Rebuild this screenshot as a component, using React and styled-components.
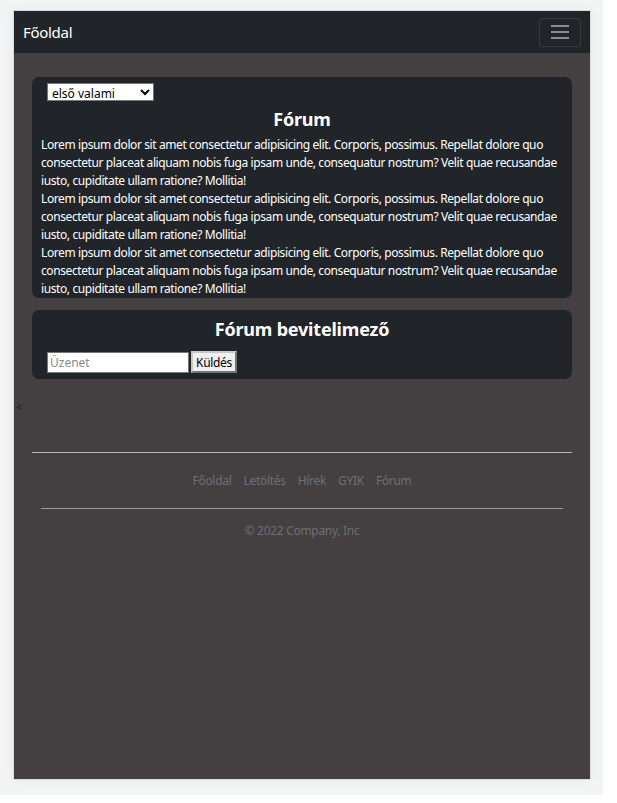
import styled, { createGlobalStyle } from "styled-components";

const GlobalStyle = createGlobalStyle`
  html, body {
    margin: 0;
    background: #ffffff;
  }
  * {
    box-sizing: border-box;
  }
`;

const paragraph =
  "Lorem ipsum dolor sit amet consectetur adipisicing elit. Corporis, possimus. Repellat dolore quo consectetur placeat aliquam nobis fuga ipsam unde, consequatur nostrum? Velit quae recusandae iusto, cupiditate ullam ratione? Mollitia!";

const footerLinks = ["Főoldal", "Letöltés", "Hírek", "GYIK", "Fórum"];

export default function App() {
  return (
    <>
      <GlobalStyle />
      <Backdrop>
        <DeviceFrame>
          <NavBar>
            <Brand>Főoldal</Brand>
            <Toggler aria-label="menu">
              <TogglerLine />
              <TogglerLine />
              <TogglerLine />
            </Toggler>
          </NavBar>
          <Main>
            <Card>
              <TopicSelect defaultValue="first">
                <option value="first">első valami</option>
              </TopicSelect>
              <CardTitle>Fórum</CardTitle>
              {[0, 1, 2].map((i) => (
                <Post key={i}>{paragraph}</Post>
              ))}
            </Card>
            <Card $gap>
              <CardTitle $large>Fórum bevitelimező</CardTitle>
              <MessageForm>
                <MessageInput placeholder="Üzenet" />
                <SendButton>Küldés</SendButton>
              </MessageForm>
            </Card>
          </Main>
          <BackMark>&lt;</BackMark>
          <Footer>
            <FooterNav>
              {footerLinks.map((link) => (
                <FooterLink key={link}>{link}</FooterLink>
              ))}
            </FooterNav>
            <Copyright>© 2022 Company, Inc</Copyright>
          </Footer>
        </DeviceFrame>
      </Backdrop>
    </>
  );
}

const Backdrop = styled.div`
  width: 603px;
  height: 795px;
  background: #f3f4f4;
  padding: 11px 13px 16px 14px;
`;

const DeviceFrame = styled.div`
  width: 576px;
  height: 768px;
  background: #443f40;
  outline: 1px solid #dcdcdc;
  box-shadow: 0 0 14px rgba(0, 0, 0, 0.06);
  font-family: "Noto Sans", "Open Sans", sans-serif;
  overflow: hidden;
`;

const NavBar = styled.nav`
  height: 42px;
  background: #212529;
  display: flex;
  align-items: center;
  justify-content: space-between;
  padding: 0 9px;
`;

const Brand = styled.span`
  color: #ffffff;
  font-size: 15px;
  letter-spacing: -0.3px;
`;

const Toggler = styled.button`
  width: 42px;
  height: 29px;
  border: 1px solid rgba(255, 255, 255, 0.1);
  border-radius: 4px;
  background: transparent;
  display: flex;
  flex-direction: column;
  align-items: center;
  justify-content: center;
  gap: 4px;
  padding: 0;
`;

const TogglerLine = styled.span`
  display: block;
  width: 18px;
  height: 2px;
  background: #8b8d90;
`;

const Main = styled.main`
  padding: 24px 18px 0;
  display: flex;
  flex-direction: column;
  gap: 12px;
`;

const Card = styled.section`
  background: #212529;
  border-radius: 7px;
  padding: ${(props) => (props.$gap ? "7px 9px 6px" : "6px 9px 0")};
  color: #ffffff;
`;

const TopicSelect = styled.select`
  display: block;
  margin-left: 6px;
  width: 107px;
  height: 18px;
  font-family: inherit;
  font-size: 12px;
  padding: 0;
  border: 1px solid #767676;
  border-radius: 0;
  background: #ffffff;
  color: #000000;
`;

const CardTitle = styled.h2`
  margin: ${(props) => (props.$large ? "0 0 10px" : "6px 0 5px")};
  text-align: center;
  font-size: 18px;
  line-height: 24px;
  font-weight: 700;
  letter-spacing: -0.2px;
`;

const Post = styled.p`
  margin: 0;
  font-size: 12px;
  line-height: 18px;
  letter-spacing: -0.4px;
`;

const MessageForm = styled.form`
  display: flex;
  align-items: center;
  gap: 2px;
  padding-left: 6px;
`;

const MessageInput = styled.input`
  width: 142px;
  height: 21px;
  font-family: inherit;
  font-size: 12px;
  padding: 1px 2px;
  border: 1px solid #767676;
  border-radius: 0;
  background: #ffffff;

  &::placeholder {
    color: #8a8a8a;
  }
`;

const SendButton = styled.button`
  height: 22px;
  font-family: inherit;
  font-size: 12px;
  letter-spacing: -0.3px;
  padding: 0 3px;
  color: #000000;
  background: #efefef;
  border: 2px outset #c8c8c8;
  border-radius: 0;
`;

const BackMark = styled.div`
  margin: 21px 0 0 2px;
  height: 14px;
  font-size: 11px;
  line-height: 14px;
  color: #1c2533;
`;

const Footer = styled.footer`
  margin: 38px 18px 0;
  border-top: 1px solid #b8b8b8;
  padding-top: 19px;
`;

const FooterNav = styled.ul`
  list-style: none;
  display: flex;
  justify-content: center;
  gap: 12px;
  margin: 0 9px 13px;
  padding: 0 0 18px;
  border-bottom: 1px solid #9c9c9c;
`;

const FooterLink = styled.li`
  font-size: 12px;
  line-height: 18px;
  letter-spacing: -0.3px;
  color: #6b7078;
`;

const Copyright = styled.p`
  margin: 0;
  text-align: center;
  font-size: 12px;
  line-height: 18px;
  letter-spacing: -0.3px;
  color: #6b7078;
`;
